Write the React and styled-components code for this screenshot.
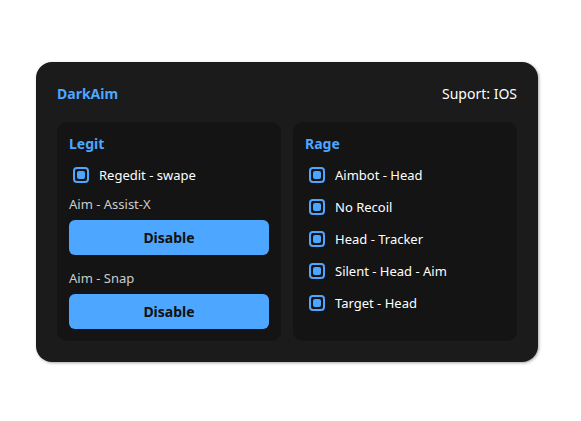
import React from "react";
import styled, { createGlobalStyle } from "styled-components";

const GlobalStyle = createGlobalStyle`
  body {
    margin: 0;
    background: #ffffff;
    font-family: "Noto Sans", "Open Sans", sans-serif;
  }
`;

const legit = ["Regedit - swape"];
const rage = [
  "Aimbot - Head",
  "No Recoil",
  "Head - Tracker",
  "Silent - Head - Aim",
  "Target - Head",
];

const App = () => {
  return (
    <>
      <GlobalStyle />
      <Page>
        <Card>
          <Header>
            <Brand>DarkAim</Brand>
            <Support>Suport: IOS</Support>
          </Header>
          <Panels>
            <Panel>
              <PanelTitle>Legit</PanelTitle>
              {legit.map((item) => (
                <Option key={item}>
                  <Check />
                  <span>{item}</span>
                </Option>
              ))}
              <Label>Aim - Assist-X</Label>
              <Button>Disable</Button>
              <Label>Aim - Snap</Label>
              <Button>Disable</Button>
            </Panel>
            <Panel>
              <PanelTitle>Rage</PanelTitle>
              {rage.map((item) => (
                <Option key={item}>
                  <Check />
                  <span>{item}</span>
                </Option>
              ))}
            </Panel>
          </Panels>
        </Card>
      </Page>
    </>
  );
};
export default App;

const Page = styled.div`
  width: 581px;
  height: 421px;
  padding: 62px 0 0 36px;
  box-sizing: border-box;
`;

const Card = styled.div`
  width: 502px;
  height: 300px;
  box-sizing: border-box;
  background: #1b1b1b;
  border-radius: 16px;
  padding: 20px 21px;
  box-shadow: 1px 1px 3px rgba(0, 0, 0, 0.35);
  display: flex;
  flex-direction: column;
`;

const Header = styled.div`
  display: flex;
  justify-content: space-between;
  align-items: center;
  height: 22px;
  margin-bottom: 18px;
`;

const Brand = styled.div`
  color: #4da6ff;
  font-weight: 700;
  font-size: 14px;
`;

const Support = styled.div`
  color: #ffffff;
  font-size: 14px;
`;

const Panels = styled.div`
  display: grid;
  grid-template-columns: 1fr 1fr;
  gap: 12px;
`;

const Panel = styled.div`
  background: #141414;
  border-radius: 10px;
  padding: 12px;
  height: 219px;
  box-sizing: border-box;
  display: flex;
  flex-direction: column;
`;

const PanelTitle = styled.div`
  color: #4da6ff;
  font-weight: 700;
  font-size: 14px;
  line-height: 20px;
  margin-bottom: 11px;
`;

const Option = styled.div`
  display: flex;
  align-items: center;
  gap: 10px;
  height: 20px;
  padding-left: 4px;
  margin-bottom: 12px;
  color: #ffffff;
  font-size: 13px;
`;

const Check = styled.span`
  width: 16px;
  height: 16px;
  box-sizing: border-box;
  border: 2px solid #4da6ff;
  border-radius: 4px;
  padding: 2px;
  display: flex;
  &::after {
    content: "";
    flex: 1;
    background: #4da6ff;
    border-radius: 2px;
  }
`;

const Label = styled.div`
  color: #cccccc;
  font-size: 13px;
  line-height: 18px;
  margin-bottom: 7px;
  ${Option} + & {
    margin-top: -2px;
  }
`;

const Button = styled.button`
  height: 35px;
  border: none;
  border-radius: 6px;
  background: #4da6ff;
  color: #111111;
  font-family: inherit;
  font-weight: 700;
  font-size: 14px;
  margin-bottom: 14px;
  &:last-child {
    margin-bottom: 0;
  }
`;
